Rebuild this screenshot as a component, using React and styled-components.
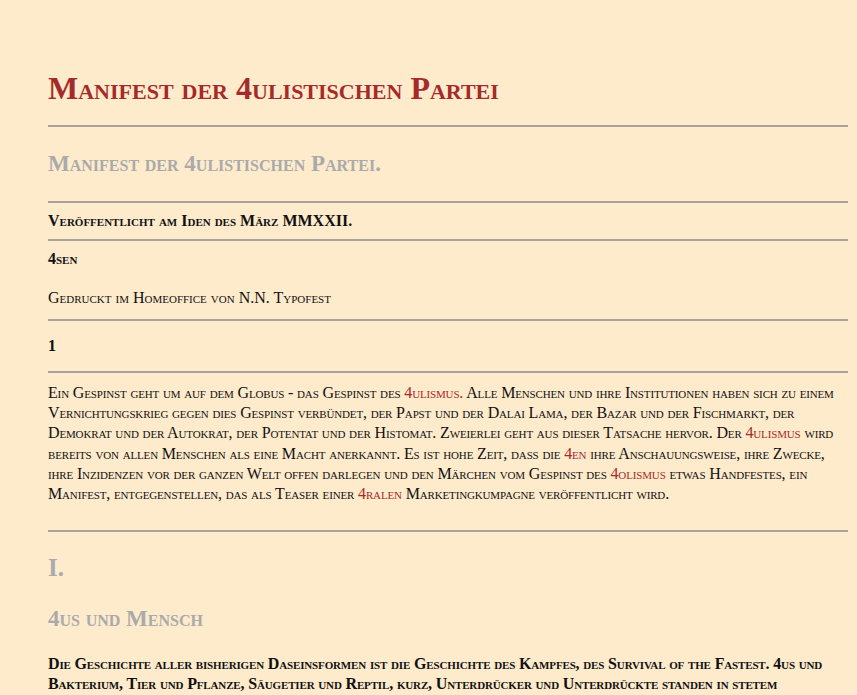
import React from "react";
import styled, { createGlobalStyle } from "styled-components";

const Global = createGlobalStyle`
  html, body { margin: 0; padding: 0; background: #feebcc; }
  body { font-family: "Liberation Serif", "DejaVu Serif", serif; color: #111; overflow: hidden; }
`;

const Page = styled.div`
  padding: 62px 9px 0 48px;
  font-variant: small-caps;
`;
const Title = styled.h1`
  margin: 0;
  color: #a52a2a;
  font-size: 32px;
  font-weight: bold;
  line-height: 52px;
`;
const Rule = styled.hr`
  border: 0;
  border-top: 2px solid #aaa29a;
  margin: ${p => p.$m || "12px 0"};
`;
const Sub = styled.h2`
  margin: 0;
  color: #aaaaaa;
  font-size: ${p => p.$size || 23}px;
  font-weight: bold;
  line-height: ${p => p.$lh || 74}px;
`;
const Line = styled.div`
  font-size: 16px;
  font-weight: ${p => (p.$bold ? "bold" : "normal")};
  line-height: ${p => p.$lh || 36}px;
`;
const Para = styled.p`
  margin: 0;
  font-size: 16px;
  line-height: 20.2px;
  letter-spacing: -0.15px;
  font-weight: ${p => (p.$bold ? "bold" : "normal")};
  padding: ${p => p.$pad || "0"};
`;
const Red = styled.span`color: #a52a2a;`;

export default function App() {
  return (
    <>
      <Global />
      <Page>
        <Title>Manifest der 4ulistischen Partei</Title>
        <Rule $m="11px 0 0" />
        <Sub>Manifest der 4ulistischen Partei.</Sub>
        <Rule $m="0" />
        <Line $bold>Veröffentlicht am Iden des März MMXXII.</Line>
        <Rule $m="0" />
        <Line $bold>4sen</Line>
        <Line $lh={42}>Gedruckt im Homeoffice von N.N. Typofest</Line>
        <Rule $m="0" />
        <Line $bold $lh={50}>1</Line>
        <Rule $m="0" />
        <Para $pad="10px 0 26px">
          Ein Gespinst geht um auf dem Globus - das Gespinst des <Red>4ulismus.</Red> Alle Menschen und ihre Institutionen haben sich zu einem Vernichtungskrieg gegen dies Gespinst verbündet, der Papst und der Dalai Lama, der Bazar und der Fischmarkt, der Demokrat und der Autokrat, der Potentat und der Histomat. Zweierlei geht aus dieser Tatsache hervor. Der <Red>4ulismus</Red> wird bereits von allen Menschen als eine Macht anerkannt. Es ist hohe Zeit, dass die <Red>4en</Red> ihre Anschauungsweise, ihre Zwecke, ihre Inzidenzen vor der ganzen Welt offen darlegen und den Märchen vom Gespinst des <Red>4olismus</Red> etwas Handfestes, ein Manifest, entgegenstellen, das als Teaser einer <Red>4ralen</Red> Marketingkumpagne veröffentlicht wird.
        </Para>
        <Rule $m="0" />
        <Sub $size={25} $lh={72}>I.</Sub>
        <Sub $lh={30}>4us und Mensch</Sub>
        <Para $bold $pad="20px 0 0">
          Die Geschichte aller bisherigen Daseinsformen ist die Geschichte des Kampfes, des Survival of the Fastest. 4us und Bakterium, Tier und Pflanze, Säugetier und Reptil, kurz, Unterdrücker und Unterdrückte standen in stetem Gegensatz zueinander.
        </Para>
      </Page>
    </>
  );
}
